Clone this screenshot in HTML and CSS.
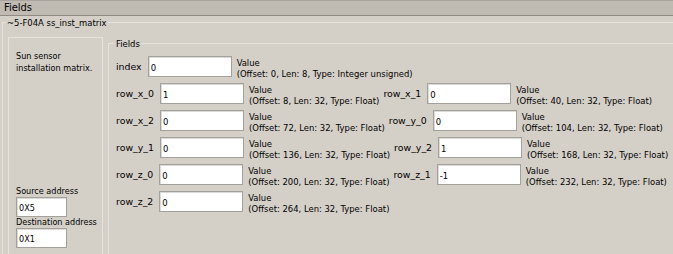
FILE: index.html
```html
<!DOCTYPE html>
<html lang="en">
<head>
    <meta charset="UTF-8">
    <title>Fields</title>
    <link rel="stylesheet" href="styles.css">
</head>
<body>
    <div class="titlebar">Fields</div>

    <fieldset class="packet">
        <legend>~5-F04A ss_inst_matrix</legend>
        <div class="packet-body">
            <div class="side">
                <div class="side-desc">Sun sensor installation matrix.</div>
                <div class="address">
                    <label>Source address</label>
                    <input class="addr-box" type="text" value="0X5">
                    <label>Destination address</label>
                    <input class="addr-box" type="text" value="0X1">
                </div>
            </div>

            <fieldset class="fields">
                <legend>Fields</legend>
                <div class="row">
                    <div class="field">
                        <label>index</label>
                        <input type="text" value="0">
                        <div class="desc">Value<br>(Offset: 0, Len: 8, Type: Integer unsigned)</div>
                    </div>
                </div>
                <div class="row">
                    <div class="field">
                        <label>row_x_0</label>
                        <input type="text" value="1">
                        <div class="desc">Value<br>(Offset: 8, Len: 32, Type: Float)</div>
                    </div>
                    <div class="field">
                        <label>row_x_1</label>
                        <input type="text" value="0">
                        <div class="desc">Value<br>(Offset: 40, Len: 32, Type: Float)</div>
                    </div>
                </div>
                <div class="row">
                    <div class="field">
                        <label>row_x_2</label>
                        <input type="text" value="0">
                        <div class="desc">Value<br>(Offset: 72, Len: 32, Type: Float)</div>
                    </div>
                    <div class="field">
                        <label>row_y_0</label>
                        <input type="text" value="0">
                        <div class="desc">Value<br>(Offset: 104, Len: 32, Type: Float)</div>
                    </div>
                </div>
                <div class="row">
                    <div class="field">
                        <label>row_y_1</label>
                        <input type="text" value="0">
                        <div class="desc">Value<br>(Offset: 136, Len: 32, Type: Float)</div>
                    </div>
                    <div class="field">
                        <label>row_y_2</label>
                        <input type="text" value="1">
                        <div class="desc">Value<br>(Offset: 168, Len: 32, Type: Float)</div>
                    </div>
                </div>
                <div class="row">
                    <div class="field">
                        <label>row_z_0</label>
                        <input type="text" value="0">
                        <div class="desc">Value<br>(Offset: 200, Len: 32, Type: Float)</div>
                    </div>
                    <div class="field">
                        <label>row_z_1</label>
                        <input type="text" value="-1">
                        <div class="desc">Value<br>(Offset: 232, Len: 32, Type: Float)</div>
                    </div>
                </div>
                <div class="row">
                    <div class="field">
                        <label>row_z_2</label>
                        <input type="text" value="0">
                        <div class="desc">Value<br>(Offset: 264, Len: 32, Type: Float)</div>
                    </div>
                </div>
            </fieldset>
        </div>
    </fieldset>
</body>
</html>
```

FILE: styles.css
```css
body {
    margin: 0;
    background-color: #d4d0c8;
    color: #000;
    font-family: "DejaVu Sans Condensed", "DejaVu Sans", sans-serif;
    font-stretch: condensed;
    font-size: 9.4px;
    overflow: hidden;
}
.titlebar {
    height: 16px;
    box-sizing: border-box;
    line-height: 14px;
    padding-left: 4px;
    font-size: 11px;
    background: #bfbbb3;
    border-top: 1px solid #aaa69f;
    border-bottom: 1px solid #8e8a84;
}
fieldset {
    margin: 0;
    border: 1px solid #e6e3de;
    min-width: 0;
}
legend {
    line-height: 13px;
    padding: 0 1px;
}
.packet {
    margin-left: 2px;
    width: 720px;
    padding: 0 0 0 5px;
}
.packet legend {
    margin-left: -2px;
}
.packet-body {
    display: flex;
    align-items: flex-start;
    margin-top: 8px;
}
.side {
    flex-shrink: 0;
    width: 95px;
    height: 230px;
    box-sizing: border-box;
    border: 1px solid #e6e3de;
    padding: 12px 0 18px 7px;
    display: flex;
    flex-direction: column;
    font-size: 9px;
    line-height: 12px;
}
.address {
    margin-top: auto;
    display: flex;
    flex-direction: column;
    align-items: flex-start;
}
.address label {
    line-height: 11px;
    white-space: nowrap;
}
.fields {
    flex-shrink: 0;
    margin-left: 5px;
    width: 570px;
    height: 240px;
    padding: 6px 0 0 7px;
}
.fields legend {
    margin-left: -1px;
}
.row {
    display: flex;
    height: 21px;
    gap: 4px;
    margin-bottom: 6px;
}
.field {
    display: flex;
    align-items: center;
}
.field label {
    font-family: "DejaVu Sans", sans-serif;
    font-stretch: normal;
    margin-right: 6px;
    white-space: nowrap;
}
input {
    font: inherit;
    width: 84px;
    height: 21px;
    box-sizing: border-box;
    margin: 0;
    padding: 1px 2px 0;
    background: #fff;
    border: 1px solid #a3a19c;
    box-shadow: inset 1px 1px 0 #dcdad6;
    outline: none;
}
.addr-box {
    width: 51px;
    height: 20px;
}
.desc {
    margin-left: 5px;
    line-height: 11px;
    white-space: nowrap;
    align-self: flex-start;
    padding-top: 1px;
}
```
